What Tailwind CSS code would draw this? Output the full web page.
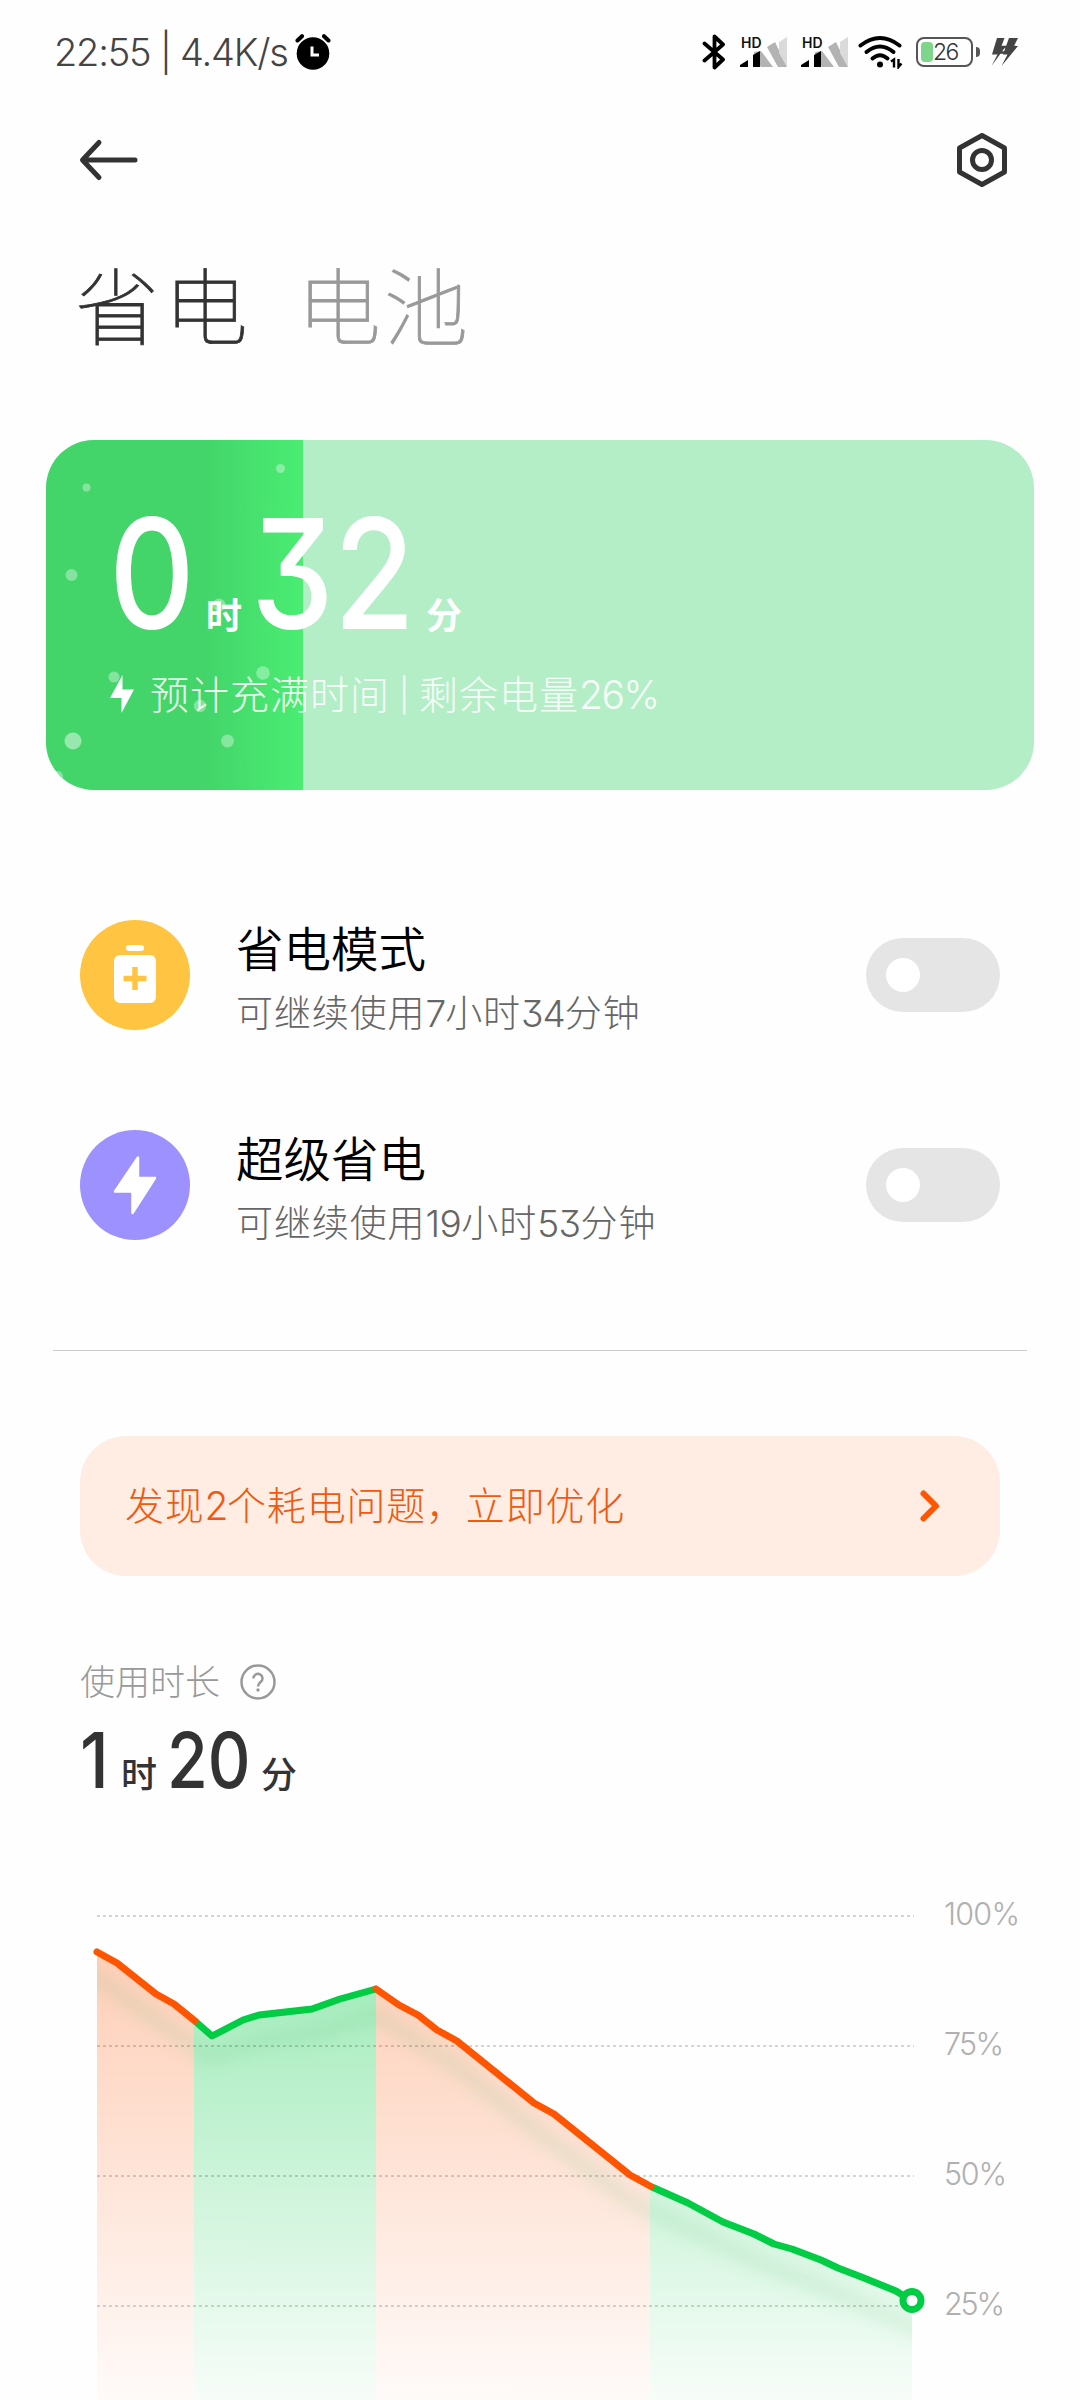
<!DOCTYPE html>
<html lang="zh-CN">
<head>
    <meta charset="UTF-8">
    <meta name="viewport" content="width=device-width, initial-scale=1.0">
    <title>省电与电池</title>
    <script src="https://cdn.jsdelivr.net/npm/@tailwindcss/browser@4"></script>
</head>
<body class="bg-[#fefefe] w-[1080px] h-[2400px] overflow-hidden font-['Inter','Noto_Sans_CJK_SC',sans-serif] [font-feature-settings:'cv09'] text-[#333]">
    <!-- Status bar -->
    <header class="flex items-center justify-between h-[104px] pl-[54px] pr-[60px]">
        <div class="flex items-center">
            <span class="w-[241px] text-[38px] leading-[44px] font-light tracking-[-1.200px] whitespace-nowrap text-[#444]">22:55 | 4.4K/s</span>
            <svg class="w-[36px] h-[36px]" viewBox="0 0 36 36">
                <circle cx="18" cy="19.5" r="16.3" fill="#000"/>
                <path d="M2.5 6.5 7 2.2M33.5 6.5 29 2.2" stroke="#000" stroke-width="4" stroke-linecap="round"/>
                <path d="M17 12.500v8.500h7" fill="none" stroke="#fff" stroke-width="3"/>
            </svg>
        </div>
        <div class="flex items-center">
            <svg class="w-[24px] h-[38px] mr-[14px]" viewBox="0 0 24 38">
                <path d="M2.500 10.500 21 26.500 12.500 34.500V3.500L21 11.500 2.500 27.500" fill="none" stroke="#000" stroke-width="3.800" stroke-linecap="round" stroke-linejoin="round"/>
            </svg>
            <svg class="w-[48px] h-[34px] mr-[13px]" viewBox="0 0 48 34">
                <text x="1" y="12.500" font-size="14" font-weight="600" fill="#111">HD</text>
                <path d="M14 17v8l7 7h12l-12-16zM27 12l8-5 12 25h-9z" fill="#b3b3b3"/>
                <path d="M39 7 47 2v30l-8-14z" fill="#dadada"/>
                <path d="M0 32v-2l8-5v7zM13 20l7-4v16h-7z" fill="#000"/>
            </svg>
            <svg class="w-[48px] h-[34px] mr-[9px]" viewBox="0 0 48 34">
                <text x="1" y="12.500" font-size="14" font-weight="600" fill="#111">HD</text>
                <path d="M14 17v8l7 7h12l-12-16zM27 12l8-5 12 25h-9z" fill="#b3b3b3"/>
                <path d="M39 7 47 2v30l-8-14z" fill="#dadada"/>
                <path d="M0 32v-2l8-5v7zM13 20l7-4v16h-7z" fill="#000"/>
            </svg>
            <svg class="w-[46px] h-[34px] mr-[12px]" viewBox="0 0 46 34">
                <g fill="none" stroke="#000" stroke-width="4" stroke-linecap="round">
                    <path d="M2.500 10.500Q22 -4.500 41.500 10.500"/>
                    <path d="M8.500 17Q22 6 35.500 17"/>
                    <path d="M14.500 23.500Q22 17 29.500 23.500"/>
                </g>
                <circle cx="22" cy="29.500" r="3" fill="#000"/>
                <path d="M33 26.500 36 24.500V32.500M40.500 24v8l3-3.500" fill="none" stroke="#000" stroke-width="2.400"/>
            </svg>
            <div class="relative flex items-center w-[57px] h-[30px] border-2 border-[#555] rounded-[8px] pl-[3px]">
                <div class="w-[12px] h-[20px] rounded-[4px] bg-[#7ed68b]"></div>
                <span class="text-[23px] leading-[26px] tracking-[-1.500px] font-light text-[#333]">26</span>
                <span class="absolute -right-[9px] top-[8px] w-[4px] h-[10px] rounded-r-[4px] bg-[#555]"></span>
            </div>
            <svg class="w-[30px] h-[30px] ml-[17px]" viewBox="0 0 30 30">
                <path d="M7 1h7.500l-3 8h4.500L1.500 29l6-11.500H2zM19 1h9l-4 8h4L11.500 29l6-11.500H13z" fill="#444"/>
                <path d="M10 10h16M5 15.500h16" stroke="#444" stroke-width="2.500"/>
            </svg>
        </div>
    </header>

    <!-- Toolbar -->
    <nav class="flex items-center justify-between h-[112px] pl-[79px] pr-[70px]">
        <svg class="w-[60px] h-[44px]" viewBox="0 0 60 44">
            <path d="M56 22H4M20 4.500 3.500 22 20 39.500" fill="none" stroke="#333" stroke-width="5" stroke-linecap="round" stroke-linejoin="round"/>
        </svg>
        <svg class="w-[56px] h-[56px]" viewBox="0 0 56 56">
            <path d="M28 3.500 50.500 16V40L28 52.500 5.500 40V16Z" fill="none" stroke="#333" stroke-width="5" stroke-linejoin="round"/>
            <circle cx="28" cy="28" r="9.500" fill="none" stroke="#333" stroke-width="5"/>
        </svg>
    </nav>

    <!-- Tabs -->
    <div class="flex h-[224px] pt-[25px] pl-[75px] text-[84px] leading-[124px] font-['Noto_Sans_CJK_SC'] font-thin [-webkit-text-stroke:0.8px]">
        <h1 class="w-[222px] tracking-[5px]">省电</h1>
        <h2 class="tracking-[3px] text-[#999]">电池</h2>
    </div>

    <!-- Charge card -->
    <section class="relative mx-[46px] h-[350px] rounded-[48px] overflow-hidden bg-[#b3eec6] text-white">
        <div class="absolute inset-y-0 left-0 w-[257px] bg-linear-to-r from-[#43d56a] from-62% to-[#4aed72]">
            <svg class="w-[257px] h-[350px]" viewBox="0 0 257 350" fill="#fff" fill-opacity="0.35">
                <circle cx="40.500" cy="47.500" r="4"/>
                <circle cx="234.500" cy="28.500" r="4.500"/>
                <circle cx="25.500" cy="135" r="6"/>
                <circle cx="173" cy="165" r="6.500"/>
                <circle cx="68" cy="237" r="5.500"/>
                <circle cx="217" cy="233" r="6.800"/>
                <circle cx="154" cy="266" r="6.200"/>
                <circle cx="27" cy="301" r="8.500" fill-opacity="0.45"/>
                <circle cx="181.500" cy="301" r="6.500"/>
                <circle cx="12" cy="336" r="5"/>
            </svg>
        </div>
        <div class="relative flex items-baseline h-[224px] pt-[42px] pl-[63px] text-[153px] leading-[184px] font-medium whitespace-nowrap">
            <span class="w-[97px] origin-left scale-x-[.87]">0</span>
            <span class="w-[45px] text-[36px] leading-none font-bold font-['Noto_Sans_CJK_SC']">时</span>
            <span class="w-[175px] origin-left scale-x-[.86]">32</span>
            <span class="text-[36px] leading-none font-bold font-['Noto_Sans_CJK_SC']">分</span>
        </div>
        <div class="relative flex items-center pl-[62px] h-[60px]">
            <svg class="w-[28px] h-[40px] mr-[14px]" viewBox="0 0 28 40">
                <path d="M14.500 1v14.500H26L13.500 39V24H2z" fill="#fff"/>
            </svg>
            <p class="flex pt-[2px] text-[39px] leading-[60px] tracking-[1px] font-light text-white/90 whitespace-nowrap">
                <span class="w-[249px]">预计充满时间</span>
                <span class="w-[20px] text-[33px]">|</span>
                <span>剩余电量<span class="tracking-[-1.500px]">26%</span></span>
            </p>
        </div>
    </section>

    <!-- Power saving modes -->
    <ul class="pt-[95px] px-[80px]">
        <li class="flex items-center h-[180px] mb-[30px]">
            <svg class="w-[110px] h-[110px] mr-[46px]" viewBox="0 0 110 110">
                <circle cx="55" cy="55" r="55" fill="#ffc542"/>
                <rect x="46" y="25" width="18" height="6" rx="3" fill="#fff"/>
                <rect x="34" y="35" width="42" height="48" rx="6" fill="#fff"/>
                <path d="M55 47v23M43.500 58.500h23" stroke="#ffc542" stroke-width="5.500"/>
            </svg>
            <div class="flex-1 pt-[13px] whitespace-nowrap">
                <p class="text-[47.500px] leading-[64px] font-[350] text-black">省电模式</p>
                <p class="text-[37px] leading-[64px] tracking-[.9px] font-light text-[#666]">可继续使用<span class="tracking-[-1px]">7</span>小时<span class="tracking-[-1px]">34</span>分钟</p>
            </div>
            <div class="flex items-center w-[134px] h-[74px] pl-[20px] rounded-full bg-[#e5e5e5]">
                <div class="size-[34px] rounded-full bg-white"></div>
            </div>
        </li>
        <li class="flex items-center h-[180px]">
            <svg class="w-[110px] h-[110px] mr-[46px]" viewBox="0 0 110 110">
                <circle cx="55" cy="55" r="55" fill="#9c91ff"/>
                <path d="M58 27.500V48H75L52.500 83V61.500H35Z" fill="#fff" stroke="#fff" stroke-width="2.500" stroke-linejoin="round"/>
            </svg>
            <div class="flex-1 pt-[13px] whitespace-nowrap">
                <p class="text-[47.500px] leading-[64px] font-[350] text-black">超级省电</p>
                <p class="text-[37px] leading-[64px] tracking-[.9px] font-light text-[#666]">可继续使用<span class="tracking-[-.5px]">19</span>小时<span class="tracking-[-.5px]">53</span>分钟</p>
            </div>
            <div class="flex items-center w-[134px] h-[74px] pl-[20px] rounded-full bg-[#e5e5e5]">
                <div class="size-[34px] rounded-full bg-white"></div>
            </div>
        </li>
    </ul>

    <hr class="mt-[75px] mx-[53px] border-t border-[#ccc]">

    <!-- Optimize banner -->
    <div class="flex items-center justify-between h-[140px] mt-[85px] mx-[80px] pl-[45px] pr-[56px] rounded-[46px] bg-[#ffede4]">
        <p class="text-[39px] leading-[60px] tracking-[.8px] font-light text-[#f0590f] whitespace-nowrap">发现<span class="tracking-[-1.500px]">2</span>个耗电问题，立即优化</p>
        <svg class="w-[28px] h-[36px]" viewBox="0 0 28 36">
            <path d="M7.500 5.500 20 18 7.500 30.500" fill="none" stroke="#ff5500" stroke-width="6" stroke-linecap="round" stroke-linejoin="round"/>
        </svg>
    </div>

    <!-- Usage time -->
    <div class="flex items-center h-[52px] mt-[80px] pl-[80px]">
        <span class="w-[160px] text-[35px] leading-[52px] font-light text-[#999]">使用时长</span>
        <svg class="w-[36px] h-[36px]" viewBox="0 0 36 36">
            <circle cx="18" cy="18" r="16.500" fill="none" stroke="#999" stroke-width="2.500"/>
            <path d="M13.500 14.500a4.500 4.500 0 1 1 7 3.600q-2.500 1.700-2.500 4.400" fill="none" stroke="#999" stroke-width="2.500"/>
            <circle cx="18" cy="26" r="1.700" fill="#999"/>
        </svg>
    </div>
    <div class="flex items-baseline h-[108px] pt-[5px] pl-[80px] text-[77px] leading-[94px] font-medium whitespace-nowrap">
        <span class="w-[41px] origin-left scale-x-[.9]">1</span>
        <span class="w-[46px] text-[36px] leading-none font-medium font-['Noto_Sans_CJK_SC']">时</span>
        <span class="w-[94px] origin-left scale-x-[.86]">20</span>
        <span class="text-[36px] leading-none font-medium font-['Noto_Sans_CJK_SC']">分</span>
    </div>

    <!-- Battery level chart, 130px per 25% -->
    <svg class="block w-[1080px] h-[584px]" viewBox="0 1816 1080 584">
        <defs>
            <linearGradient id="orangeFill" gradientUnits="userSpaceOnUse" x1="0" y1="1916" x2="0" y2="2434">
                <stop offset="0" stop-color="#ff5500" stop-opacity="0.3"/>
                <stop offset="1" stop-color="#ff5500" stop-opacity="0"/>
            </linearGradient>
            <linearGradient id="greenFill" gradientUnits="userSpaceOnUse" x1="0" y1="1916" x2="0" y2="2434">
                <stop offset="0" stop-color="#00cc44" stop-opacity="0.4"/>
                <stop offset="1" stop-color="#00cc44" stop-opacity="0"/>
            </linearGradient>
            <filter id="soft" x="-10%" y="-10%" width="120%" height="120%">
                <feGaussianBlur stdDeviation="8"/>
            </filter>
            <clipPath id="area">
                <path d="M97 1952 117 1963 156 1994 174 2004 195 2021 212 2036 243 2020 259 2015 312 2009 340 1999 376 1989 399 2005 418 2015 437 2030 457 2041 534 2103 554 2114 630 2175 652 2187 688 2203 723 2222 754 2234 774 2244 792 2249 821 2260 838 2268 864 2278 896 2291 912 2301V2400H97Z"/>
            </clipPath>
        </defs>
        <path d="M97 1952 117 1963 156 1994 174 2004 194 2020V2400H97ZM376 1989 399 2005 418 2015 437 2030 457 2041 534 2103 554 2114 630 2175 650 2186V2400H376Z" fill="url(#orangeFill)"/>
        <path d="M194 2020 212 2036 243 2020 259 2015 312 2009 340 1999 376 1989V2400H194ZM650 2186 688 2203 723 2222 754 2234 774 2244 792 2249 821 2260 838 2268 864 2278 896 2291 912 2301V2400H650Z" fill="url(#greenFill)"/>
        <g clip-path="url(#area)">
            <path d="M70 1964 97 1978 156 2020 195 2047 212 2058 243 2046 259 2041 312 2035 376 2015 457 2067 534 2129 630 2201 688 2229 754 2260 838 2294 912 2327 930 2335" fill="none" stroke="#5fb870" stroke-opacity="0.15" stroke-width="14" filter="url(#soft)"/>
        </g>
        <g stroke="#000" stroke-opacity="0.16" stroke-width="2" stroke-dasharray="3 3">
            <path d="M97 1916H914M97 2046H914M97 2176H914M97 2306H914"/>
        </g>
        <g fill="none" stroke-width="7" stroke-linejoin="round">
            <path d="M195 2021 212 2036 243 2020 259 2015 312 2009 340 1999 376 1989M652 2187 688 2203 723 2222 754 2234 774 2244 792 2249 821 2260 838 2268 864 2278 896 2291 912 2301" stroke="#00cc44"/>
            <path d="M97 1952 117 1963 156 1994 174 2004 195 2021M376 1989 399 2005 418 2015 437 2030 457 2041 534 2103 554 2114 630 2175 651 2186.500" stroke="#ff5500" stroke-linecap="round"/>
        </g>
        <circle cx="912" cy="2300.500" r="9" fill="#fff" stroke="#00cc44" stroke-width="7"/>
        <g font-size="30.500" font-weight="300" fill="#b0b0b0">
            <text x="944" y="1925" textLength="76">100%</text>
            <text x="944" y="2055" textLength="60">75%</text>
            <text x="944" y="2185" textLength="63">50%</text>
            <text x="944" y="2315" textLength="61">25%</text>
        </g>
    </svg>
</body>
</html>
